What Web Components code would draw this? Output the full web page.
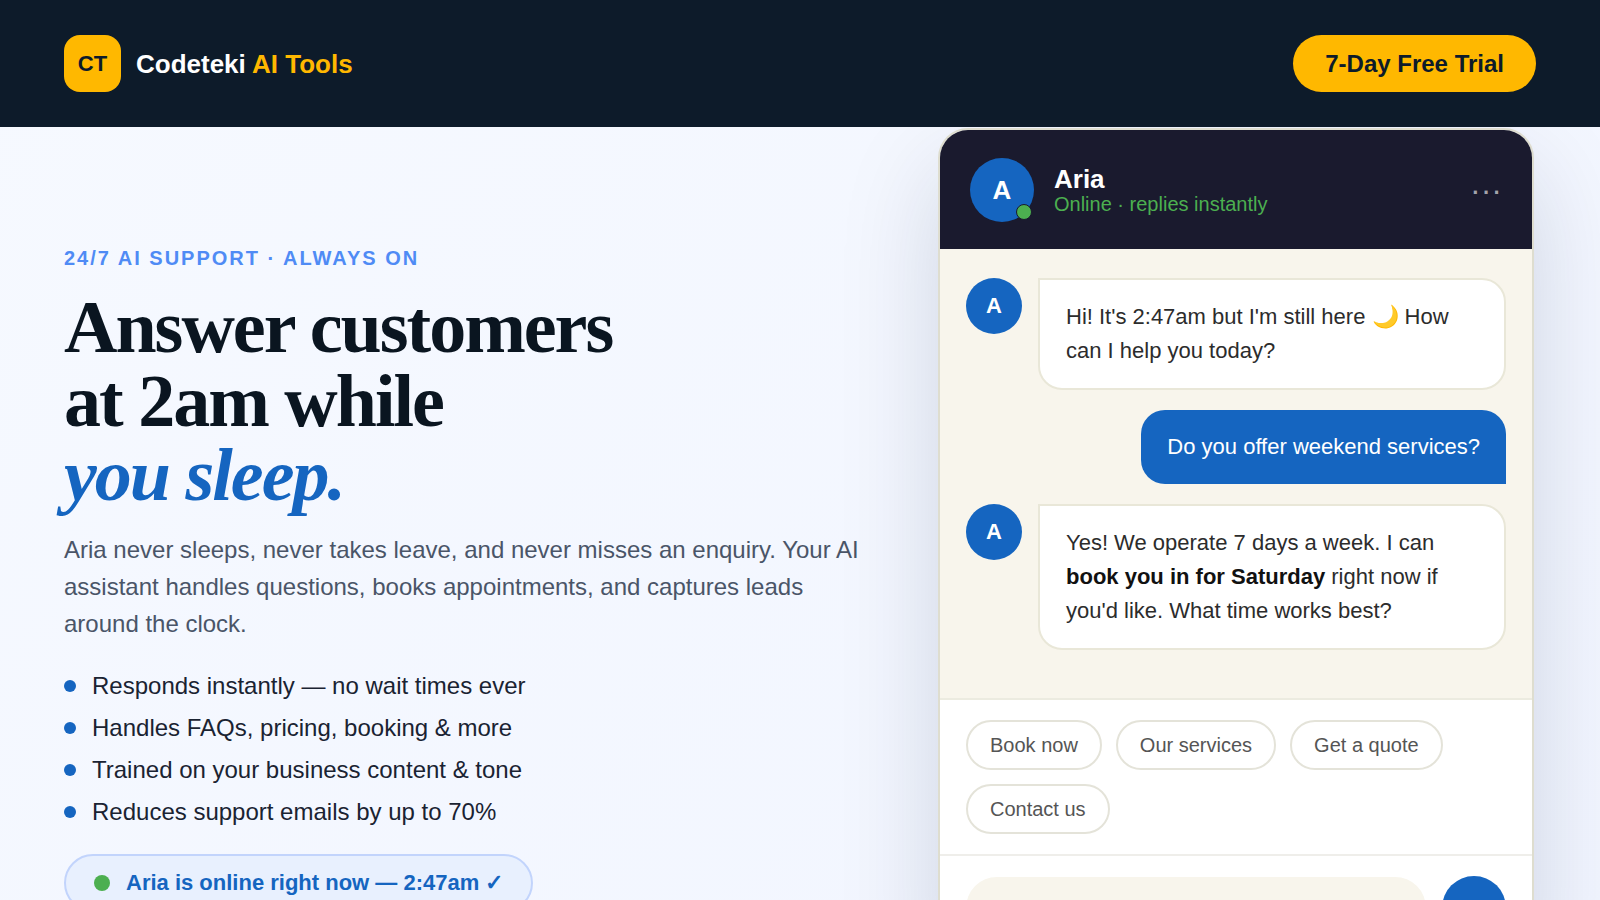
<!DOCTYPE html>
<html lang="en">
<head>
<meta charset="utf-8">
<title>Codeteki AI Tools</title>
<style>
  html { scrollbar-width: none; }
  body {
    margin: 0;
    min-height: 100vh;
    font-family: "Liberation Sans", Arial, sans-serif;
    color: #0a1520;
    background: linear-gradient(135deg, #f6f9ff 0%, #f1f5ff 100%);
    --navy: #0d1b2a;
    --amber: #ffb800;
    --blue: #1565c0;
    --green: #4caf50;
    --cream: #f8f5ec;
    --line: #e9e7d8;
  }
</style>
</head>
<body>
<ct-header></ct-header>
<ct-hero>
  <ct-pitch>
    <span slot="eyebrow">24/7 AI SUPPORT · ALWAYS ON</span>
    <span slot="title">Answer customers<br>at 2am while</span>
    <span slot="accent">you sleep.</span>
    <span slot="lead">Aria never sleeps, never takes leave, and never misses an enquiry. Your AI assistant handles questions, books appointments, and captures leads around the clock.</span>
    <ct-feature>Responds instantly — no wait times ever</ct-feature>
    <ct-feature>Handles FAQs, pricing, booking &amp; more</ct-feature>
    <ct-feature>Trained on your business content &amp; tone</ct-feature>
    <ct-feature>Reduces support emails by up to 70%</ct-feature>
    <ct-status slot="status">Aria is online right now — 2:47am ✓</ct-status>
  </ct-pitch>
  <ct-chat>
    <ct-message from="bot">Hi! It's 2:47am but I'm still here 🌙 How can I help you today?</ct-message>
    <ct-message from="user">Do you offer weekend services?</ct-message>
    <ct-message from="bot">Yes! We operate 7 days a week. I can <strong>book you in for Saturday</strong> right now if you'd like. What time works best?</ct-message>
    <ct-chip slot="chips">Book now</ct-chip>
    <ct-chip slot="chips">Our services</ct-chip>
    <ct-chip slot="chips">Get a quote</ct-chip>
    <ct-chip slot="chips">Contact us</ct-chip>
  </ct-chat>
</ct-hero>

<script>
const define = (name, html) => {
  const template = document.createElement('template');
  template.innerHTML = html;
  customElements.define(name, class extends HTMLElement {
    connectedCallback() {
      if (this.shadowRoot) return;
      this.attachShadow({ mode: 'open' });
      this.shadowRoot.appendChild(template.content.cloneNode(true));
    }
  });
};

define('ct-header', `
<style>
  :host {
    display: block;
    position: relative;
    z-index: 1;
    background: var(--navy);
  }
  header {
    display: flex;
    align-items: center;
    justify-content: space-between;
    padding: 35px 64px;
  }
  .brand {
    display: flex;
    align-items: center;
    gap: 15px;
    color: #fff;
    font-size: 26px;
    font-weight: 700;
    text-decoration: none;
  }
  .mark {
    display: grid;
    place-items: center;
    width: 57px; height: 57px;
    border-radius: 16px;
    background: var(--amber);
    color: var(--navy);
    font-size: 22px;
  }
  .word { padding-top: 2px; }
  em { font-style: normal; color: var(--amber); }
  button {
    height: 57px;
    padding: 0 32px;
    border: none;
    border-radius: 30px;
    background: var(--amber);
    color: var(--navy);
    font: 700 24px/28px "Liberation Sans", Arial, sans-serif;
    cursor: pointer;
  }
</style>
<header>
  <a class="brand" href="#"><span class="mark">CT</span><span class="word">Codeteki <em>AI Tools</em></span></a>
  <button type="button">7-Day Free Trial</button>
</header>
`);

define('ct-hero', `
<style>
  :host {
    display: flex;
    align-items: flex-start;
    gap: 64px;
    padding: 1px 66px 0 64px;
  }
</style>
<slot></slot>
`);

define('ct-pitch', `
<style>
  :host {
    display: block;
    flex: 1;
    min-width: 0;
    padding: 118px 0 40px;
  }
  .eyebrow {
    margin: 0 0 20px;
    font-size: 20px;
    font-weight: 700;
    line-height: 24px;
    letter-spacing: 2px;
    color: #4f8bf5;
  }
  h1 {
    margin: 0 0 19px;
    font: 700 74px/74px "Liberation Serif", "Times New Roman", serif;
    letter-spacing: -2px;
  }
  em { display: block; color: var(--blue); }
  .lead {
    margin: 0 0 30px;
    font-size: 24px;
    line-height: 37px;
    color: #4a5568;
  }
  .features {
    display: flex;
    flex-direction: column;
    gap: 14px;
    margin-bottom: 28px;
  }
</style>
<p class="eyebrow"><slot name="eyebrow"></slot></p>
<h1><slot name="title"></slot><em><slot name="accent"></slot></em></h1>
<p class="lead"><slot name="lead"></slot></p>
<div class="features" role="list"><slot></slot></div>
<slot name="status"></slot>
`);

define('ct-feature', `
<style>
  :host {
    display: flex;
    align-items: center;
    gap: 16px;
    font-size: 24px;
    line-height: 28px;
    color: #1a2332;
  }
  i {
    width: 12px; height: 12px;
    border-radius: 50%;
    background: var(--blue);
    flex-shrink: 0;
  }
</style>
<i></i><span role="listitem"><slot></slot></span>
`);

define('ct-status', `
<style>
  :host {
    display: inline-flex;
    align-items: center;
    gap: 16px;
    padding: 14px 28px;
    border: 2px solid #c2d4fc;
    border-radius: 40px;
    background: #e8f0fe;
    color: var(--blue);
    font-size: 22px;
    font-weight: 700;
    line-height: 26px;
  }
  i {
    width: 16px; height: 16px;
    border-radius: 50%;
    background: var(--green);
  }
</style>
<i></i><span><slot></slot></span>
`);

define('ct-avatar', `
<style>
  :host {
    display: grid;
    place-items: center;
    width: 56px; height: 56px;
    border-radius: 50%;
    background: var(--blue);
    color: #fff;
    font-size: 22px;
    font-weight: 700;
    line-height: 1;
    flex-shrink: 0;
  }
</style>
<span><slot></slot></span>
`);

define('ct-chip', `
<style>
  :host { display: block; }
  button {
    display: block;
    height: 50px;
    padding: 0 22px;
    border: 2px solid #e4e3d9;
    border-radius: 25px;
    background: #fff;
    color: #555;
    font: 20px/24px "Liberation Sans", Arial, sans-serif;
    cursor: pointer;
  }
</style>
<button type="button"><slot></slot></button>
`);

const messageTemplate = document.createElement('template');
messageTemplate.innerHTML = `
<style>
  :host {
    display: flex;
    align-items: flex-start;
    gap: 16px;
  }
  .bubble {
    padding: 20px 26px;
    border: 2px solid var(--line);
    border-radius: 0 24px 24px 24px;
    background: #fff;
    color: #2c2c2c;
    font-size: 22px;
    line-height: 34px;
  }
  :host([from="user"]) { justify-content: flex-end; }
  :host([from="user"]) .bubble {
    border: none;
    border-radius: 24px 24px 0 24px;
    background: var(--blue);
    color: #fff;
  }
  ::slotted(strong) { color: #111; }
</style>
<div class="bubble"><slot></slot></div>
`;

class CtMessage extends HTMLElement {
  connectedCallback() {
    if (this.shadowRoot) return;
    this.attachShadow({ mode: 'open' });
    this.shadowRoot.appendChild(messageTemplate.content.cloneNode(true));
    if (this.getAttribute('from') === 'bot') {
      const avatar = document.createElement('ct-avatar');
      avatar.textContent = 'A';
      this.shadowRoot.insertBefore(avatar, this.shadowRoot.querySelector('.bubble'));
    }
  }
}
customElements.define('ct-message', CtMessage);

define('ct-chat', `
<style>
  :host {
    display: block;
    box-sizing: border-box;
    width: 596px;
    flex-shrink: 0;
    overflow: hidden;
    border: 2px solid #deddcf;
    border-radius: 30px;
    background: #fff;
    box-shadow: 0 40px 100px rgba(13, 27, 62, 0.15);
  }
  .head {
    display: flex;
    align-items: center;
    gap: 20px;
    padding: 28px 30px 27px;
    background: #1a1a2e;
  }
  .who { position: relative; }
  .who ct-avatar { width: 64px; height: 64px; font-size: 26px; }
  .dot {
    position: absolute;
    right: 2px; bottom: 2px;
    box-sizing: border-box;
    width: 16px; height: 16px;
    border: 1px solid #1a1a2e;
    border-radius: 50%;
    background: var(--green);
  }
  .label { flex: 1; }
  .name {
    color: #fff;
    font-size: 26px;
    font-weight: 700;
    line-height: 28px;
  }
  .state {
    color: var(--green);
    font-size: 20px;
    line-height: 22px;
  }
  .menu {
    padding: 0;
    border: none;
    background: none;
    color: #a3a3ab;
    font: 32px/32px "Liberation Sans", Arial, sans-serif;
    cursor: pointer;
  }
  .log {
    display: flex;
    flex-direction: column;
    gap: 20px;
    box-sizing: border-box;
    min-height: 449px;
    padding: 29px 26px;
    background: var(--cream);
  }
  .chips {
    display: flex;
    flex-wrap: wrap;
    gap: 14px;
    padding: 20px 26px;
    border-top: 2px solid #ecebe0;
  }
  form {
    display: flex;
    align-items: center;
    gap: 16px;
    padding: 20px 26px;
    border-top: 2px solid #efeeea;
  }
  input {
    flex: 1;
    min-width: 0;
    box-sizing: border-box;
    height: 62px;
    padding: 0 28px;
    border: none;
    border-radius: 31px;
    background: var(--cream);
    font: 22px "Liberation Sans", Arial, sans-serif;
  }
  .send {
    width: 64px; height: 64px;
    padding: 0;
    border: none;
    border-radius: 50%;
    background: var(--blue);
    cursor: pointer;
  }
</style>
<div class="head">
  <div class="who"><ct-avatar>A</ct-avatar><span class="dot"></span></div>
  <div class="label">
    <div class="name">Aria</div>
    <div class="state">Online · replies instantly</div>
  </div>
  <button class="menu" type="button" aria-label="More options">···</button>
</div>
<div class="log"><slot></slot></div>
<div class="chips"><slot name="chips"></slot></div>
<form>
  <input type="text" aria-label="Message">
  <button class="send" type="button" aria-label="Send"></button>
</form>
`);
</script>
</body>
</html>
